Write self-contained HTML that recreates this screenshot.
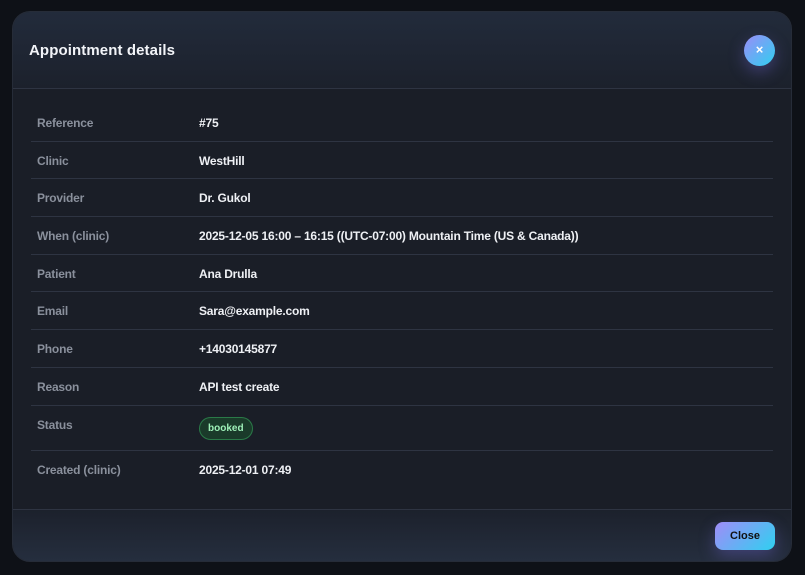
<!DOCTYPE html>
<html><head><style>
*{margin:0;padding:0;box-sizing:border-box}
body{width:805px;height:575px;background:#0e1117;font-family:"Liberation Sans",sans-serif;position:relative;overflow:hidden}
.m{position:absolute;left:12px;top:11px;width:780px;height:551px;border-radius:18px;background:#1a1e27;border:1px solid #262c38;overflow:hidden}
.h{position:absolute;left:0;top:0;right:0;height:77px;background:linear-gradient(180deg,#222b3b,#1c212c);border-bottom:1px solid #2e3442}
.h h1{position:absolute;left:16px;top:30px;font-size:15px;font-weight:bold;color:#f2f4f8;letter-spacing:0.1px}
.x{position:absolute;left:731px;top:23px;width:31px;height:31px;border-radius:50%;background:linear-gradient(135deg,#9b8cf8,#2fd0f0);color:#fff;font-size:13px;font-weight:bold;text-align:center;line-height:30px;box-shadow:0 6px 16px rgba(120,110,230,.35)}
.t{position:absolute;left:18px;top:92px;width:742px}
.r{border-bottom:1px solid #2e3442;height:38px;position:relative;font-size:12px;font-weight:bold;letter-spacing:-0.2px}
.r .l{position:absolute;left:6px;top:12px;color:#8a909c}
.r .v{position:absolute;left:168px;top:12px;color:#eef0f4}
.f{position:absolute;left:0;right:0;top:497px;bottom:0;background:linear-gradient(180deg,#1c212c,#252e3e);border-top:1px solid #2e3442}
.c{position:absolute;left:702px;top:12px;width:60px;height:28px;border-radius:8px;background:linear-gradient(135deg,#a08cf8,#2fd0f0);color:#111;font-size:11px;font-weight:bold;text-align:center;line-height:29px;box-shadow:0 6px 16px rgba(120,110,230,.35)}
.b{display:inline-block;padding:5px 8px;border-radius:12px;background:#1a3a2a;border:1px solid #2a7a48;color:#9ef0b8;font-size:10px;font-weight:bold;letter-spacing:0}
</style></head><body>
<div class="m">
<div class="h"><h1>Appointment details</h1><div class="x">×</div></div>
<div class="t">
<div class="r"><span class="l">Reference</span><span class="v">#75</span></div>
<div class="r" style="height:37px"><span class="l">Clinic</span><span class="v">WestHill</span></div>
<div class="r"><span class="l">Provider</span><span class="v">Dr. Gukol</span></div>
<div class="r"><span class="l">When (clinic)</span><span class="v">2025-12-05 16:00 – 16:15 ((UTC-07:00) Mountain Time (US &amp; Canada))</span></div>
<div class="r" style="height:37px"><span class="l">Patient</span><span class="v">Ana Drulla</span></div>
<div class="r"><span class="l">Email</span><span class="v">Sara@example.com</span></div>
<div class="r"><span class="l">Phone</span><span class="v">+14030145877</span></div>
<div class="r"><span class="l">Reason</span><span class="v">API test create</span></div>
<div class="r" style="height:45px"><span class="l">Status</span><span class="v" style="top:11px"><span class="b">booked</span></span></div>
<div class="r" style="border:none"><span class="l" style="top:12px">Created (clinic)</span><span class="v" style="top:12px">2025-12-01 07:49</span></div>
</div>
<div class="f"><div class="c">Close</div></div>
</div>
</body></html>
